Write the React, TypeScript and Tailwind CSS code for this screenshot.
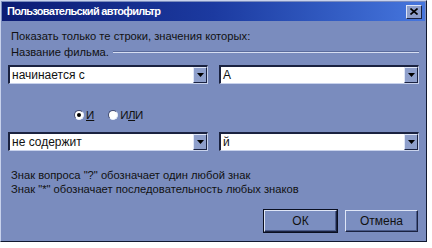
import React from "react";

const font = { fontFamily: '"Liberation Sans", Arial, sans-serif' };

function Combo({ value }: { value: string }) {
  return (
    <div className="flex h-[19px] w-[200px] border-t-2 border-l-2 border-t-[#1a2240] border-l-[#1a2240] border-b border-r border-b-[#c8d2ec] border-r-[#c8d2ec] bg-white">
      <div className="flex-1 pl-[2px] text-[12px] leading-[16px] text-[#111]">{value}</div>
      <div className="flex h-[16px] w-[14px] items-center justify-center border border-t-[#dfe6f7] border-l-[#dfe6f7] border-b-[#1a2240] border-r-[#1a2240] bg-[#8e9fcb]">
        <svg width="7" height="4" viewBox="0 0 7 4">
          <path d="M0 0 H7 L3.5 4 Z" fill="#000" />
        </svg>
      </div>
    </div>
  );
}

function Radio({ checked }: { checked: boolean }) {
  return (
    <div className="flex h-[10px] w-[10px] items-center justify-center rounded-full border border-t-[#404a70] border-l-[#404a70] border-b-[#e8eefa] border-r-[#e8eefa] bg-white">
      {checked && <div className="h-[4px] w-[4px] rounded-full bg-black" />}
    </div>
  );
}

function Btn({ children, def }: { children: React.ReactNode; def?: boolean }) {
  return (
    <div className={def ? "border border-[#0a0f20]" : "border border-transparent"}>
      <div className="flex h-[22px] w-[73px] items-center justify-center border border-t-[#dfe6f7] border-l-[#dfe6f7] border-b-[#1a2240] border-r-[#1a2240] bg-[#7b8ec0] text-[12px] text-[#111] shadow-[inset_-1px_-1px_0_#4a5a88]">
        {children}
      </div>
    </div>
  );
}

export default function App() {
  return (
    <div className="h-[248px] w-[432px] bg-white" style={font}>
      <div className="flex h-[242px] w-[427px] flex-col border border-t-[#c8d2ec] border-l-[#c8d2ec] border-b-[#101830] border-r-[#101830] bg-[#7a8cbe]">
        <div className="mx-[1px] mt-[1px] flex h-[19px] items-center justify-between bg-gradient-to-r from-[#0c1c74] via-[#1c3aa0] to-[#4676de] pl-[5px] pr-[3px]">
          <span className="text-[11px] font-bold tracking-[-0.7px] text-white">Пользовательский автофильтр</span>
          <div className="flex h-[14px] w-[16px] items-center justify-center border border-t-[#dfe6f7] border-l-[#dfe6f7] border-b-[#1a2240] border-r-[#1a2240] bg-[#8e9fcb]">
            <svg width="8" height="7" viewBox="0 0 8 7">
              <path d="M0.5 0.5 L7.5 6.5 M7.5 0.5 L0.5 6.5" stroke="#000" strokeWidth="1.6" />
            </svg>
          </div>
        </div>
        <div className="flex flex-col px-[7px] text-[11px] text-[#111]">
          <div className="mt-[8px] pl-[3px] text-[11.2px] leading-[14px]">Показать только те строки, значения которых:</div>
          <div className="mt-[2px] flex items-center pl-[3px] text-[11.2px] leading-[14px]">
            <span>Название фильма.</span>
            <div className="ml-[4px] flex-1 border-t border-b border-t-[#5a6b9c] border-b-[#d6def2]" />
          </div>
          <div className="mt-[6px] flex gap-[11px]">
            <Combo value="начинается с" />
            <Combo value="А" />
          </div>
          <div className="mt-[24px] flex items-center pl-[66px] text-[11.5px] leading-[14px]">
            <Radio checked />
            <span className="ml-[2px]"><u>И</u></span>
            <div className="ml-[14px]">
              <Radio checked={false} />
            </div>
            <span className="ml-[2px] tracking-[-0.5px]">И<u>Л</u>И</span>
          </div>
          <div className="mt-[10px] flex gap-[11px]">
            <Combo value="не содержит" />
            <Combo value="й" />
          </div>
          <div className="mt-[17px] pl-[3px] text-[11.2px] leading-[14px]">Знак вопроса "?" обозначает один любой знак</div>
          <div className="pl-[3px] text-[11.2px] leading-[14px]">Знак "*" обозначает последовательность любых знаков</div>
          <div className="mt-[13px] flex justify-end gap-[6px] pr-[0px]">
            <Btn def>ОК</Btn>
            <Btn>Отмена</Btn>
          </div>
        </div>
      </div>
    </div>
  );
}
